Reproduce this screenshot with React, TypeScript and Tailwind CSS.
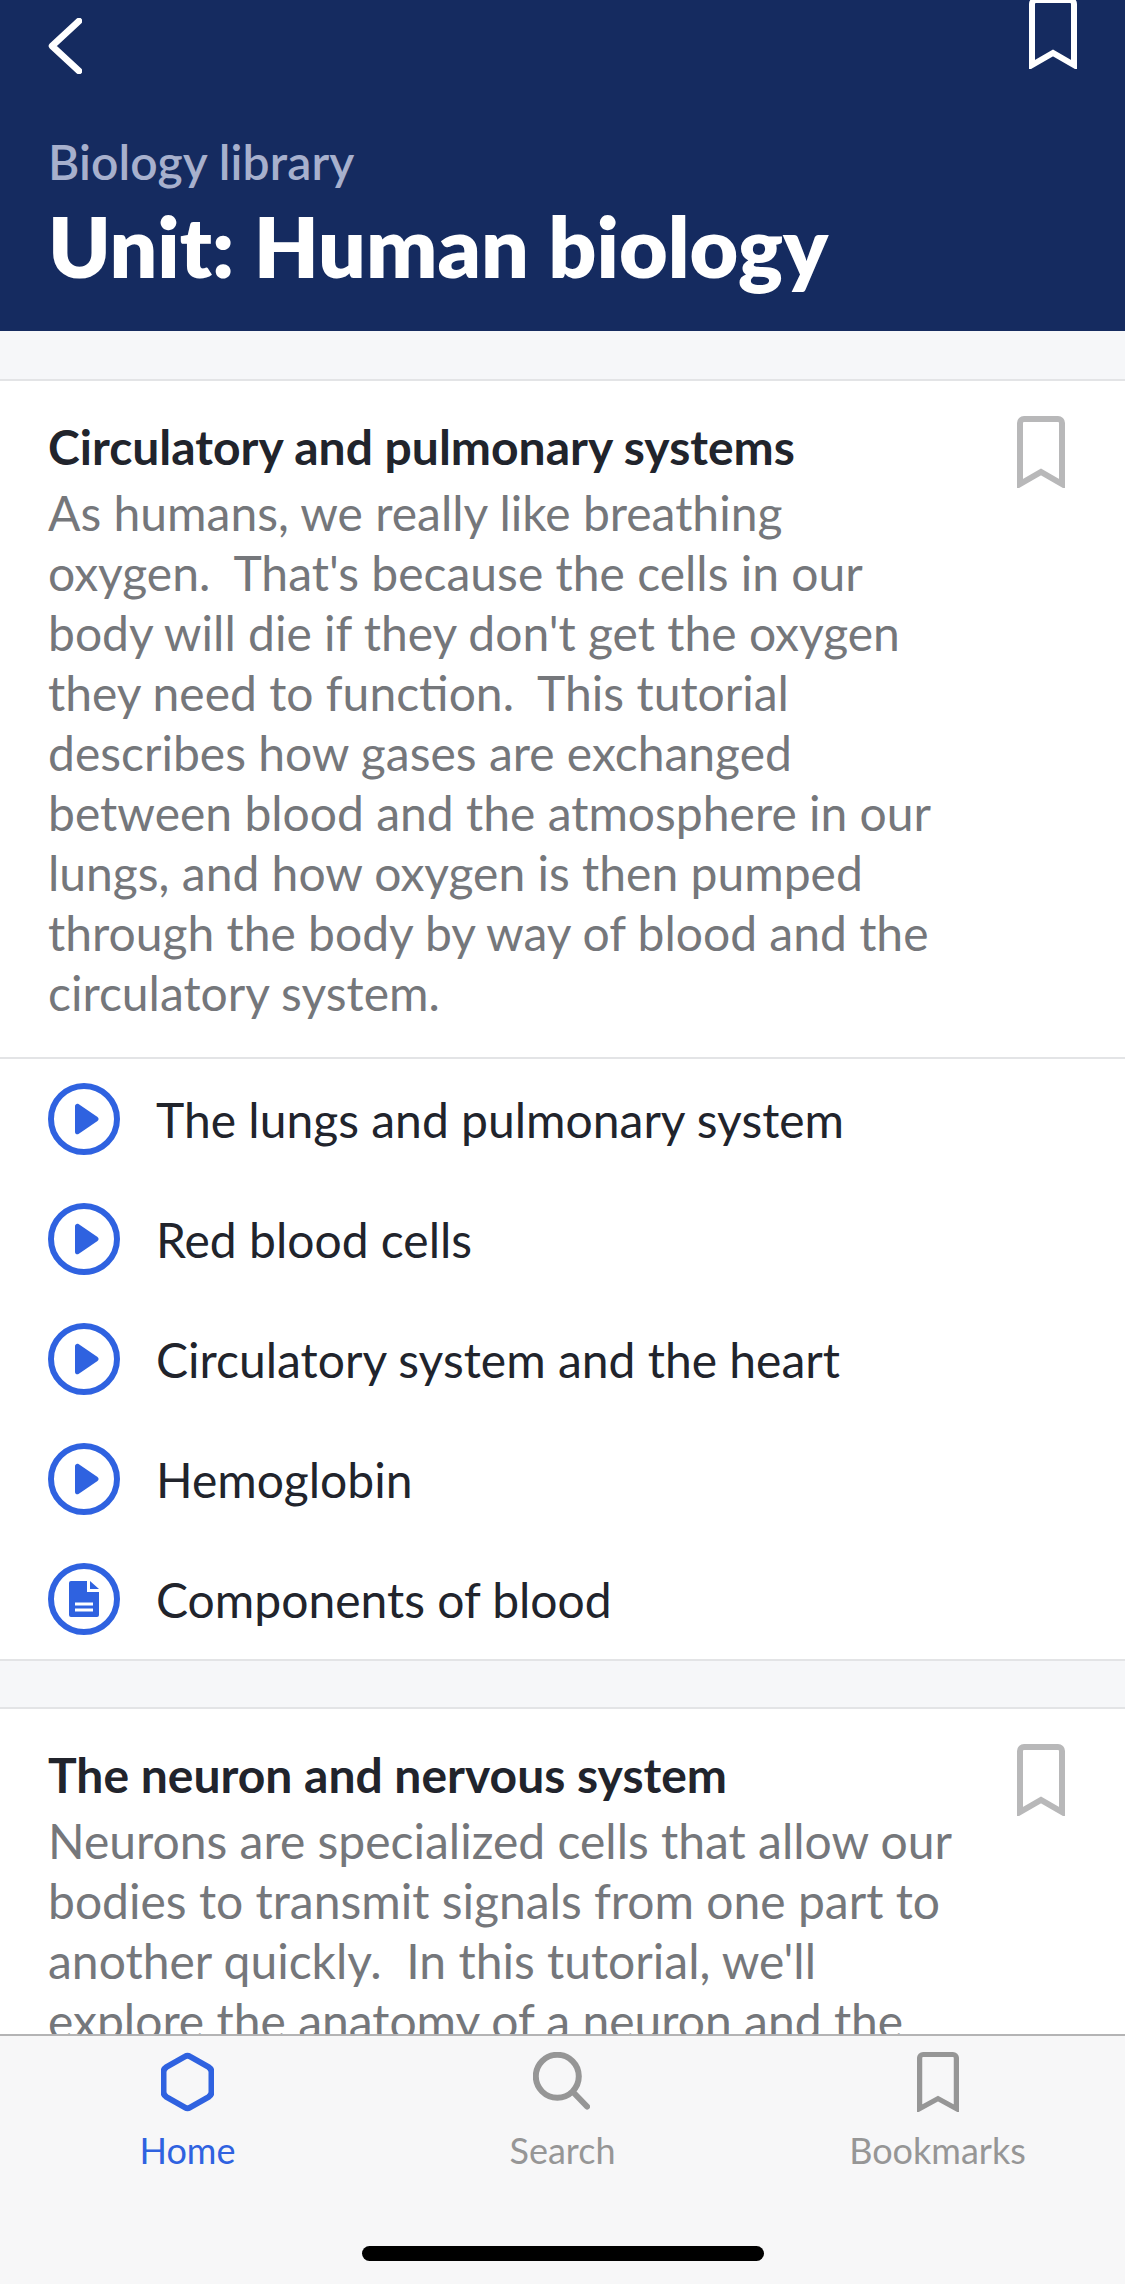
import React from "react";

const lessons = [
  { title: "The lungs and pulmonary system", type: "video" },
  { title: "Red blood cells", type: "video" },
  { title: "Circulatory system and the heart", type: "video" },
  { title: "Hemoglobin", type: "video" },
  { title: "Components of blood", type: "article" },
];

function BookmarkIcon({ className }: { className: string }) {
  return (
    <svg viewBox="0 0 48 72" preserveAspectRatio="none" className={className} fill="none" stroke="currentColor" strokeWidth="6">
      <path d="M3 68V7a4 4 0 0 1 4-4h34a4 4 0 0 1 4 4v61L24 56Z" />
    </svg>
  );
}

function LessonIcon({ type }: { type: string }) {
  return (
    <svg viewBox="0 0 72 72" className="h-[72px] w-[72px] shrink-0">
      <circle cx="36" cy="36" r="33" fill="none" stroke="#2f62e0" strokeWidth="6" />
      {type === "video" ? (
        <path d="M27 23c0-1.800 2-2.900 3.500-2l19 13c1.400 1 1.400 3 0 4l-19 13c-1.500 1-3.500-.2-3.500-2Z" fill="#2f62e0" />
      ) : (
        <>
          <path d="M21 20a2 2 0 0 1 2-2h16v11h12v23a2 2 0 0 1-2 2H23a2 2 0 0 1-2-2Z" fill="#2f62e0" />
          <path d="M42 18l9 8h-9Z" fill="#2f62e0" />
          <path d="M27 41h18M27 47h18" stroke="#fff" strokeWidth="3" />
        </>
      )}
    </svg>
  );
}

function Section({ title, text }: { title: string; text: string[] }) {
  return (
    <div className="border-t-2 border-[#e3e4e6] bg-white pt-[30px] pr-[60px] pb-[34px] pl-12">
      <div className="flex items-start justify-between">
        <div>
          <h2 className="text-[48px] leading-[72px] font-bold text-[#21242c]">{title}</h2>
          <p className="text-[48px] leading-[60px] text-[#75777b]">
            {text.map((line) => (
              <span key={line} className="block whitespace-pre">
                {line}
              </span>
            ))}
          </p>
        </div>
        <BookmarkIcon className="mt-[5px] h-[72px] w-[48px] shrink-0 text-[#b8b8b9]" />
      </div>
    </div>
  );
}

export default function App() {
  return (
    <div className="flex h-[2284px] w-[1125px] flex-col overflow-hidden bg-[#f6f7f9] font-['Lato','Open_Sans',sans-serif]">
      {/* HEADER */}
      <div className="h-[331px] shrink-0 bg-[#152b60] px-12">
        <div className="flex items-start justify-between">
          <svg viewBox="0 0 34 56" className="mt-[18px] h-[56px] w-[34px]" fill="none" stroke="#fff" strokeWidth="6.500" strokeLinecap="round" strokeLinejoin="round">
            <path d="M31 3 4 28l27 25" />
          </svg>
          <BookmarkIcon className="mt-[-3px] h-[72px] w-[48px] text-white" />
        </div>
        <p className="mt-[58px] text-[48px] leading-[60px] font-semibold tracking-[0.1px] text-[#a7b0cd]">Biology library</p>
        <h1 className="mt-[4px] text-[84px] leading-[100px] font-extrabold text-white">Unit: Human biology</h1>
      </div>

      <div className="min-h-0 flex-1 overflow-hidden pt-[48px]">
        <Section
          title="Circulatory and pulmonary systems"
          text={[
            "As humans, we really like breathing",
            "oxygen.  That's because the cells in our",
            "body will die if they don't get the oxygen",
            "they need to function.  This tutorial",
            "describes how gases are exchanged",
            "between blood and the atmosphere in our",
            "lungs, and how oxygen is then pumped",
            "through the body by way of blood and the",
            "circulatory system.",
          ]}
        />
        <div className="border-y-2 border-[#e3e4e6] bg-white">
          {lessons.map((lesson) => (
            <div key={lesson.title} className="flex h-[120px] items-center gap-9 px-12">
              <LessonIcon type={lesson.type} />
              <span className="pt-[2px] text-[48px] text-[#21242c]">{lesson.title}</span>
            </div>
          ))}
        </div>
        <div className="h-[46px]" />
        <Section
          title="The neuron and nervous system"
          text={[
            "Neurons are specialized cells that allow our",
            "bodies to transmit signals from one part to",
            "another quickly.  In this tutorial, we'll",
            "explore the anatomy of a neuron and the",
          ]}
        />
      </div>

      {/* TAB BAR */}
      <div className="relative h-[250px] shrink-0 border-t-2 border-[#b4b4b5] bg-[#f7f7f8]">
        <div className="grid grid-cols-3 pt-[16px]">
          <div className="flex flex-col items-center text-[#2f62e0]">
            <svg viewBox="0 0 53 60" className="h-[60px] w-[53px]" fill="none" stroke="currentColor" strokeWidth="6">
              <path d="M24 4.500q2.500-1.500 5 0L47.500 15q3 2 3 5v20q0 3-3 5L29 55.500q-2.500 1.500-5 0L5.500 45q-3-2-3-5V20q0-3 3-5Z" />
            </svg>
            <span className="mt-[16px] text-[36px] leading-[44px]">Home</span>
          </div>
          <div className="flex flex-col items-center text-[#969696]">
            <svg viewBox="0 0 57 60" className="mr-[3px] h-[60px] w-[57px]" fill="none" stroke="currentColor" strokeWidth="6" strokeLinecap="round">
              <circle cx="24.300" cy="24.300" r="21.500" />
              <path d="m40 40 14 14.500" />
            </svg>
            <span className="mt-[16px] text-[36px] leading-[44px]">Search</span>
          </div>
          <div className="flex flex-col items-center text-[#969696]">
            <BookmarkIcon className="h-[60px] w-[42px]" />
            <span className="mt-[16px] text-[36px] leading-[44px]">Bookmarks</span>
          </div>
        </div>
        <div className="absolute bottom-[23px] left-[362px] h-[15px] w-[402px] rounded-full bg-black" />
      </div>
    </div>
  );
}
